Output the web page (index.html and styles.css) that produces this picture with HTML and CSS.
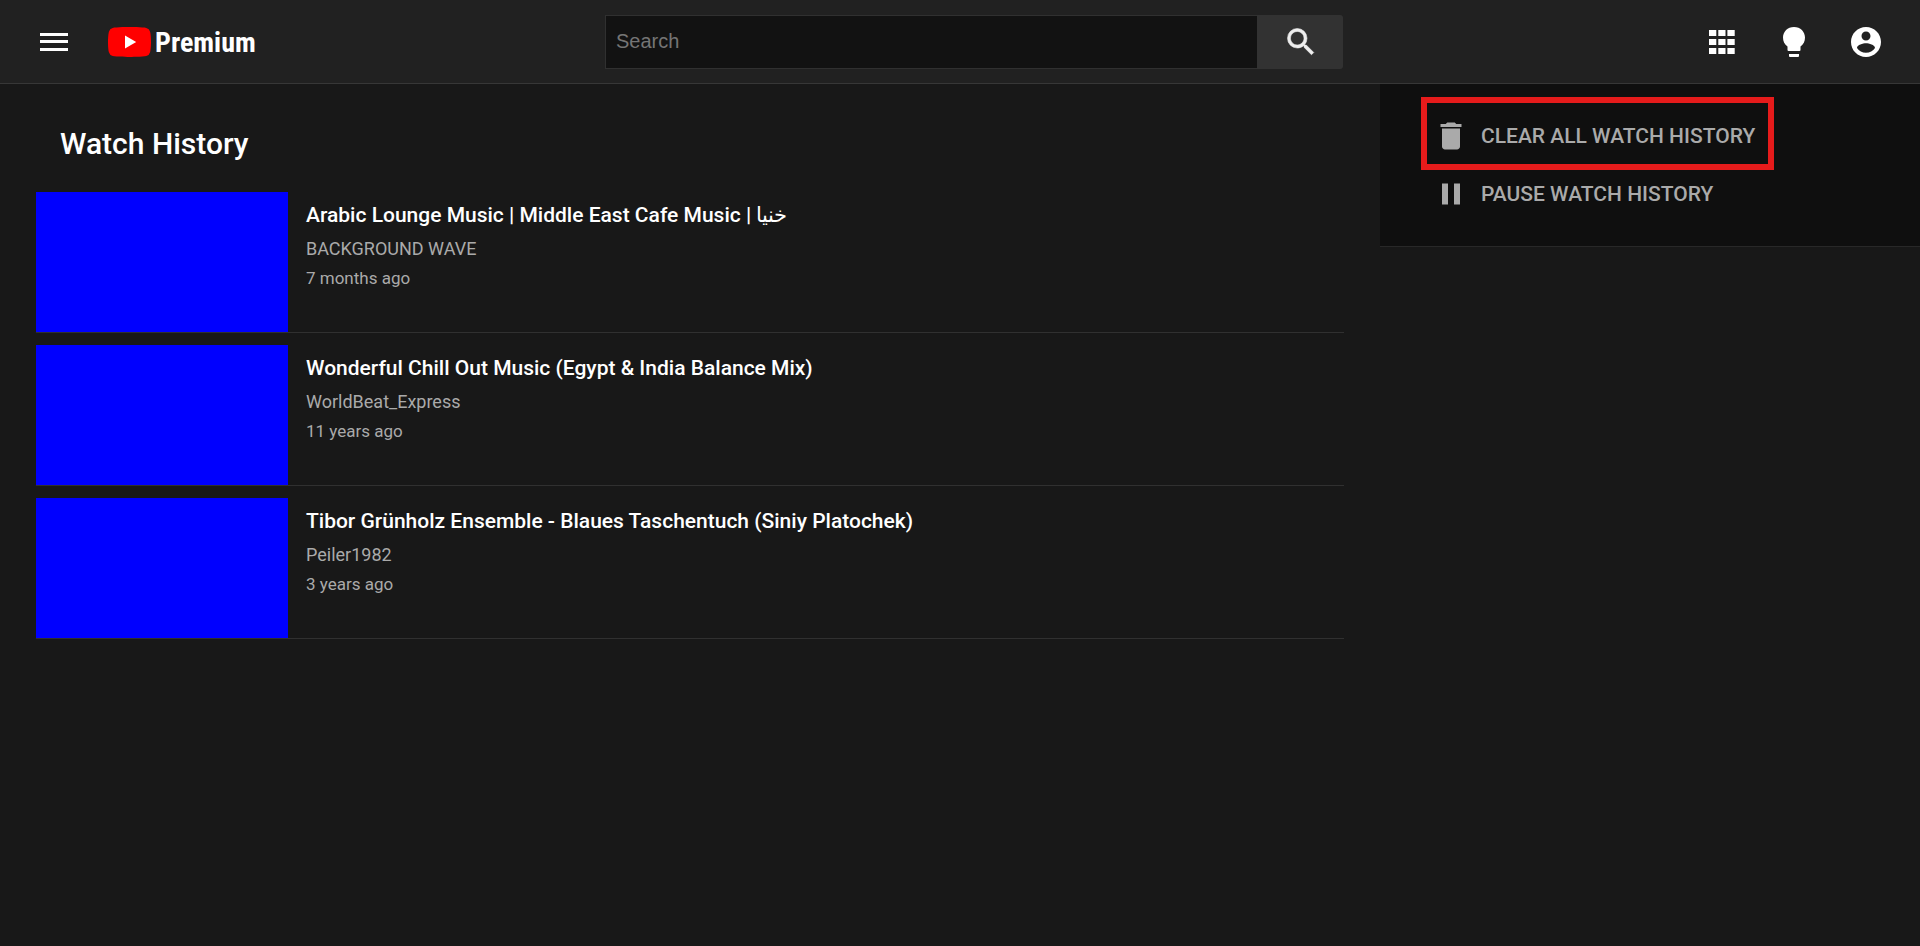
FILE: index.html
```html
<!DOCTYPE html>
<html lang="en">
<head>
<meta charset="utf-8">
<title>Watch History</title>
<link rel="stylesheet" href="styles.css">
</head>
<body>
<header class="topbar">
  <div class="topbar-start">
    <button class="icon-btn" type="button" aria-label="Menu">
      <svg class="icon" viewBox="0 0 36 36" fill="currentColor"><path d="M4 9h28v3H4zM4 16h28v3H4zM4 24h28v3H4z"/></svg>
    </button>
    <a class="logo" href="#">
      <svg class="logo-mark" viewBox="0 0 43 30"><path fill="#f00" d="M42.1 4.7A5.4 5.4 0 0 0 38.3.9C34.9 0 21.5 0 21.5 0S8.100 0 4.700.9A5.400 5.400 0 0 0 .9 4.700C0 8 0 15 0 15s0 7 .9 10.300a5.400 5.400 0 0 0 3.800 3.800C8.100 30 21.500 30 21.500 30s13.400 0 16.800-.9a5.400 5.400 0 0 0 3.800-3.800C43 22 43 15 43 15s0-7-.9-10.300z"/><path fill="#fff" d="M17 8.500v13L28.200 15z"/></svg>
      <span class="logo-text">Premium</span>
    </a>
  </div>
  <form class="search" role="search">
    <input class="search-input" type="search" placeholder="Search" aria-label="Search">
    <button class="search-btn" type="button" aria-label="Submit search">
      <svg class="icon" viewBox="0 0 24 24" fill="currentColor" stroke="currentColor" stroke-width=".4"><path d="M15.500 14h-.79l-.28-.27A6.471 6.471 0 0 0 16 9.500 6.500 6.500 0 1 0 9.500 16c1.610 0 3.090-.59 4.230-1.570l.27.28v.79l5 4.990L20.490 19l-4.990-5zm-6 0C7.010 14 5 11.990 5 9.500S7.010 5 9.500 5 14 7.010 14 9.500 11.990 14 9.500 14z"/></svg>
    </button>
  </form>
  <nav class="topbar-end" aria-label="Account">
    <button class="icon-btn" type="button" aria-label="Apps">
      <svg class="icon" viewBox="0 0 36 36" fill="currentColor"><path d="M5 6h7.300v6H5zM14.300 6h7.200v6h-7.200zM23.400 6h7.300v6h-7.300zM5 15h7.300v6H5zM14.300 15h7.200v6h-7.200zM23.400 15h7.300v6h-7.300zM5 24h7.300v6H5zM14.300 24h7.200v6h-7.200zM23.400 24h7.300v6h-7.300z"/></svg>
    </button>
    <button class="icon-btn" type="button" aria-label="Toggle theme">
      <svg class="icon" viewBox="0 0 36 36" fill="currentColor"><path d="M18 3C11.500 3 7 7.800 7 13.500c0 4 1.600 7 4.500 9V26q0 1 1 1h11q1 0 1-1v-3.500c2.900-2 4.500-5 4.500-9C29 7.800 24.500 3 18 3zM13 30h10v2q0 1-1 1h-8q-1 0-1-1z"/></svg>
    </button>
    <button class="icon-btn" type="button" aria-label="Account">
      <svg class="icon" viewBox="0 0 24 24" fill="currentColor"><path d="M12 2C6.480 2 2 6.480 2 12s4.480 10 10 10 10-4.480 10-10S17.520 2 12 2zm0 3c1.660 0 3 1.340 3 3s-1.340 3-3 3-3-1.340-3-3 1.340-3 3-3zm0 14.200c-2.500 0-4.710-1.280-6-3.220.03-1.990 4-3.080 6-3.080 1.990 0 5.970 1.090 6 3.080-1.290 1.940-3.500 3.220-6 3.220z"/></svg>
    </button>
  </nav>
</header>
<div class="page">
  <main class="history">
    <h1 class="history-title">Watch History</h1>
    <ul class="video-list">
      <li class="video">
        <a class="thumb" href="#" aria-label="Arabic Lounge Music"></a>
        <div class="video-info">
          <h2 class="video-title">Arabic Lounge Music | Middle East Cafe Music | خنيا</h2>
          <p class="channel">BACKGROUND WAVE</p>
          <p class="age">7 months ago</p>
        </div>
      </li>
      <li class="video">
        <a class="thumb" href="#" aria-label="Wonderful Chill Out Music"></a>
        <div class="video-info">
          <h2 class="video-title">Wonderful Chill Out Music (Egypt &amp; India Balance Mix)</h2>
          <p class="channel">WorldBeat_Express</p>
          <p class="age">11 years ago</p>
        </div>
      </li>
      <li class="video">
        <a class="thumb" href="#" aria-label="Tibor Grünholz Ensemble"></a>
        <div class="video-info">
          <h2 class="video-title">Tibor Grünholz Ensemble - Blaues Taschentuch (Siniy Platochek)</h2>
          <p class="channel">Peiler1982</p>
          <p class="age">3 years ago</p>
        </div>
      </li>
    </ul>
  </main>
  <aside class="actions">
    <button class="action action-marked" type="button">
      <svg class="icon" viewBox="0 0 24 24" fill="currentColor"><path d="M6 19c0 1.100.9 2 2 2h8c1.100 0 2-.9 2-2V7H6v12zM19 4h-3.500l-1-1h-5l-1 1H5v2h14V4z"/></svg>
      CLEAR ALL WATCH HISTORY
    </button>
    <button class="action" type="button">
      <svg class="icon" viewBox="0 0 24 24" fill="currentColor"><path d="M6 19h4V5H6v14zm8-14v14h4V5h-4z"/></svg>
      PAUSE WATCH HISTORY
    </button>
  </aside>
</div>
</body>
</html>
```
FILE: styles.css
```css
* {
  box-sizing: border-box;
}

body {
  margin: 0;
  min-height: 100vh;
  background: #181818;
  color: #fff;
  font-family: Roboto, "Liberation Sans", sans-serif;
}

button {
  padding: 0;
  border: 0;
  background: none;
  color: inherit;
  font: inherit;
  cursor: pointer;
}

.icon {
  display: block;
  flex: none;
  width: 36px;
  height: 36px;
}

.topbar {
  display: grid;
  grid-template-columns: 605px minmax(0, 738px) 1fr;
  align-items: center;
  height: 84px;
  border-bottom: 1px solid #373737;
  background: #212121;
}

.topbar-start {
  display: flex;
  align-items: center;
  padding-left: 18px;
}

.icon-btn {
  display: grid;
  place-items: center;
  width: 72px;
  height: 72px;
}

.logo {
  display: flex;
  align-items: center;
  gap: 4px;
  padding-left: 18px;
  color: #fff;
  text-decoration: none;
}

.logo-mark {
  width: 43px;
  height: 30px;
}

.logo-text {
  padding-top: 2px;
  font-family: "Roboto Condensed", "Liberation Sans Narrow", Roboto, sans-serif;
  font-size: 28px;
  font-weight: 700;
  line-height: 30px;
}

.search {
  display: flex;
  height: 54px;
}

.search-input {
  flex: 1;
  min-width: 0;
  padding: 0 10px;
  border: 1px solid #303030;
  border-right: 0;
  border-radius: 0;
  background: #121212;
  color: #fff;
  font-family: "Liberation Sans", Arial, sans-serif;
  font-size: 20px;
  outline: none;
}

.search-input::placeholder {
  color: #757575;
}

.search-btn {
  display: grid;
  place-items: center;
  width: 86px;
  padding-left: 2px;
  border-radius: 0 3px 3px 0;
  background: #323232;
  color: #eee;
}

.topbar-end {
  display: flex;
  justify-content: flex-end;
  padding-right: 18px;
}

.page {
  display: flex;
  align-items: flex-start;
}

.history {
  flex: 1;
  padding: 36px;
}

.history-title {
  margin: 0 24px 24px;
  font-size: 30px;
  font-weight: 500;
  line-height: 48px;
}

.video-list {
  display: grid;
  gap: 12px;
  margin: 0;
  padding: 0;
  list-style: none;
}

.video {
  display: flex;
  gap: 18px;
  border-bottom: 1px solid #303030;
}

.thumb {
  flex: none;
  width: 252px;
  height: 140px;
  background: #00f;
}

.video-info {
  padding-top: 8px;
}

.video-title {
  margin: 0 0 4px;
  font-size: 21px;
  font-weight: 500;
  line-height: 30px;
}

.channel,
.age {
  margin: 0;
  color: #aaa;
}

.channel {
  font-size: 18px;
  line-height: 30px;
}

.age {
  font-size: 17px;
  line-height: 28px;
}

.actions {
  display: flex;
  flex-direction: column;
  align-items: flex-start;
  width: 540px;
  padding: 23px 53px;
  border-bottom: 1px solid #282828;
  background: #0f0f0f;
}

.action {
  position: relative;
  display: flex;
  align-items: center;
  gap: 12px;
  height: 58px;
  color: #aaa;
  font-size: 21px;
  font-weight: 500;
}

.action-marked::after {
  content: "";
  position: absolute;
  inset: -10px -19px -5px -12px;
  border: 6px solid #e61b1b;
}
```
